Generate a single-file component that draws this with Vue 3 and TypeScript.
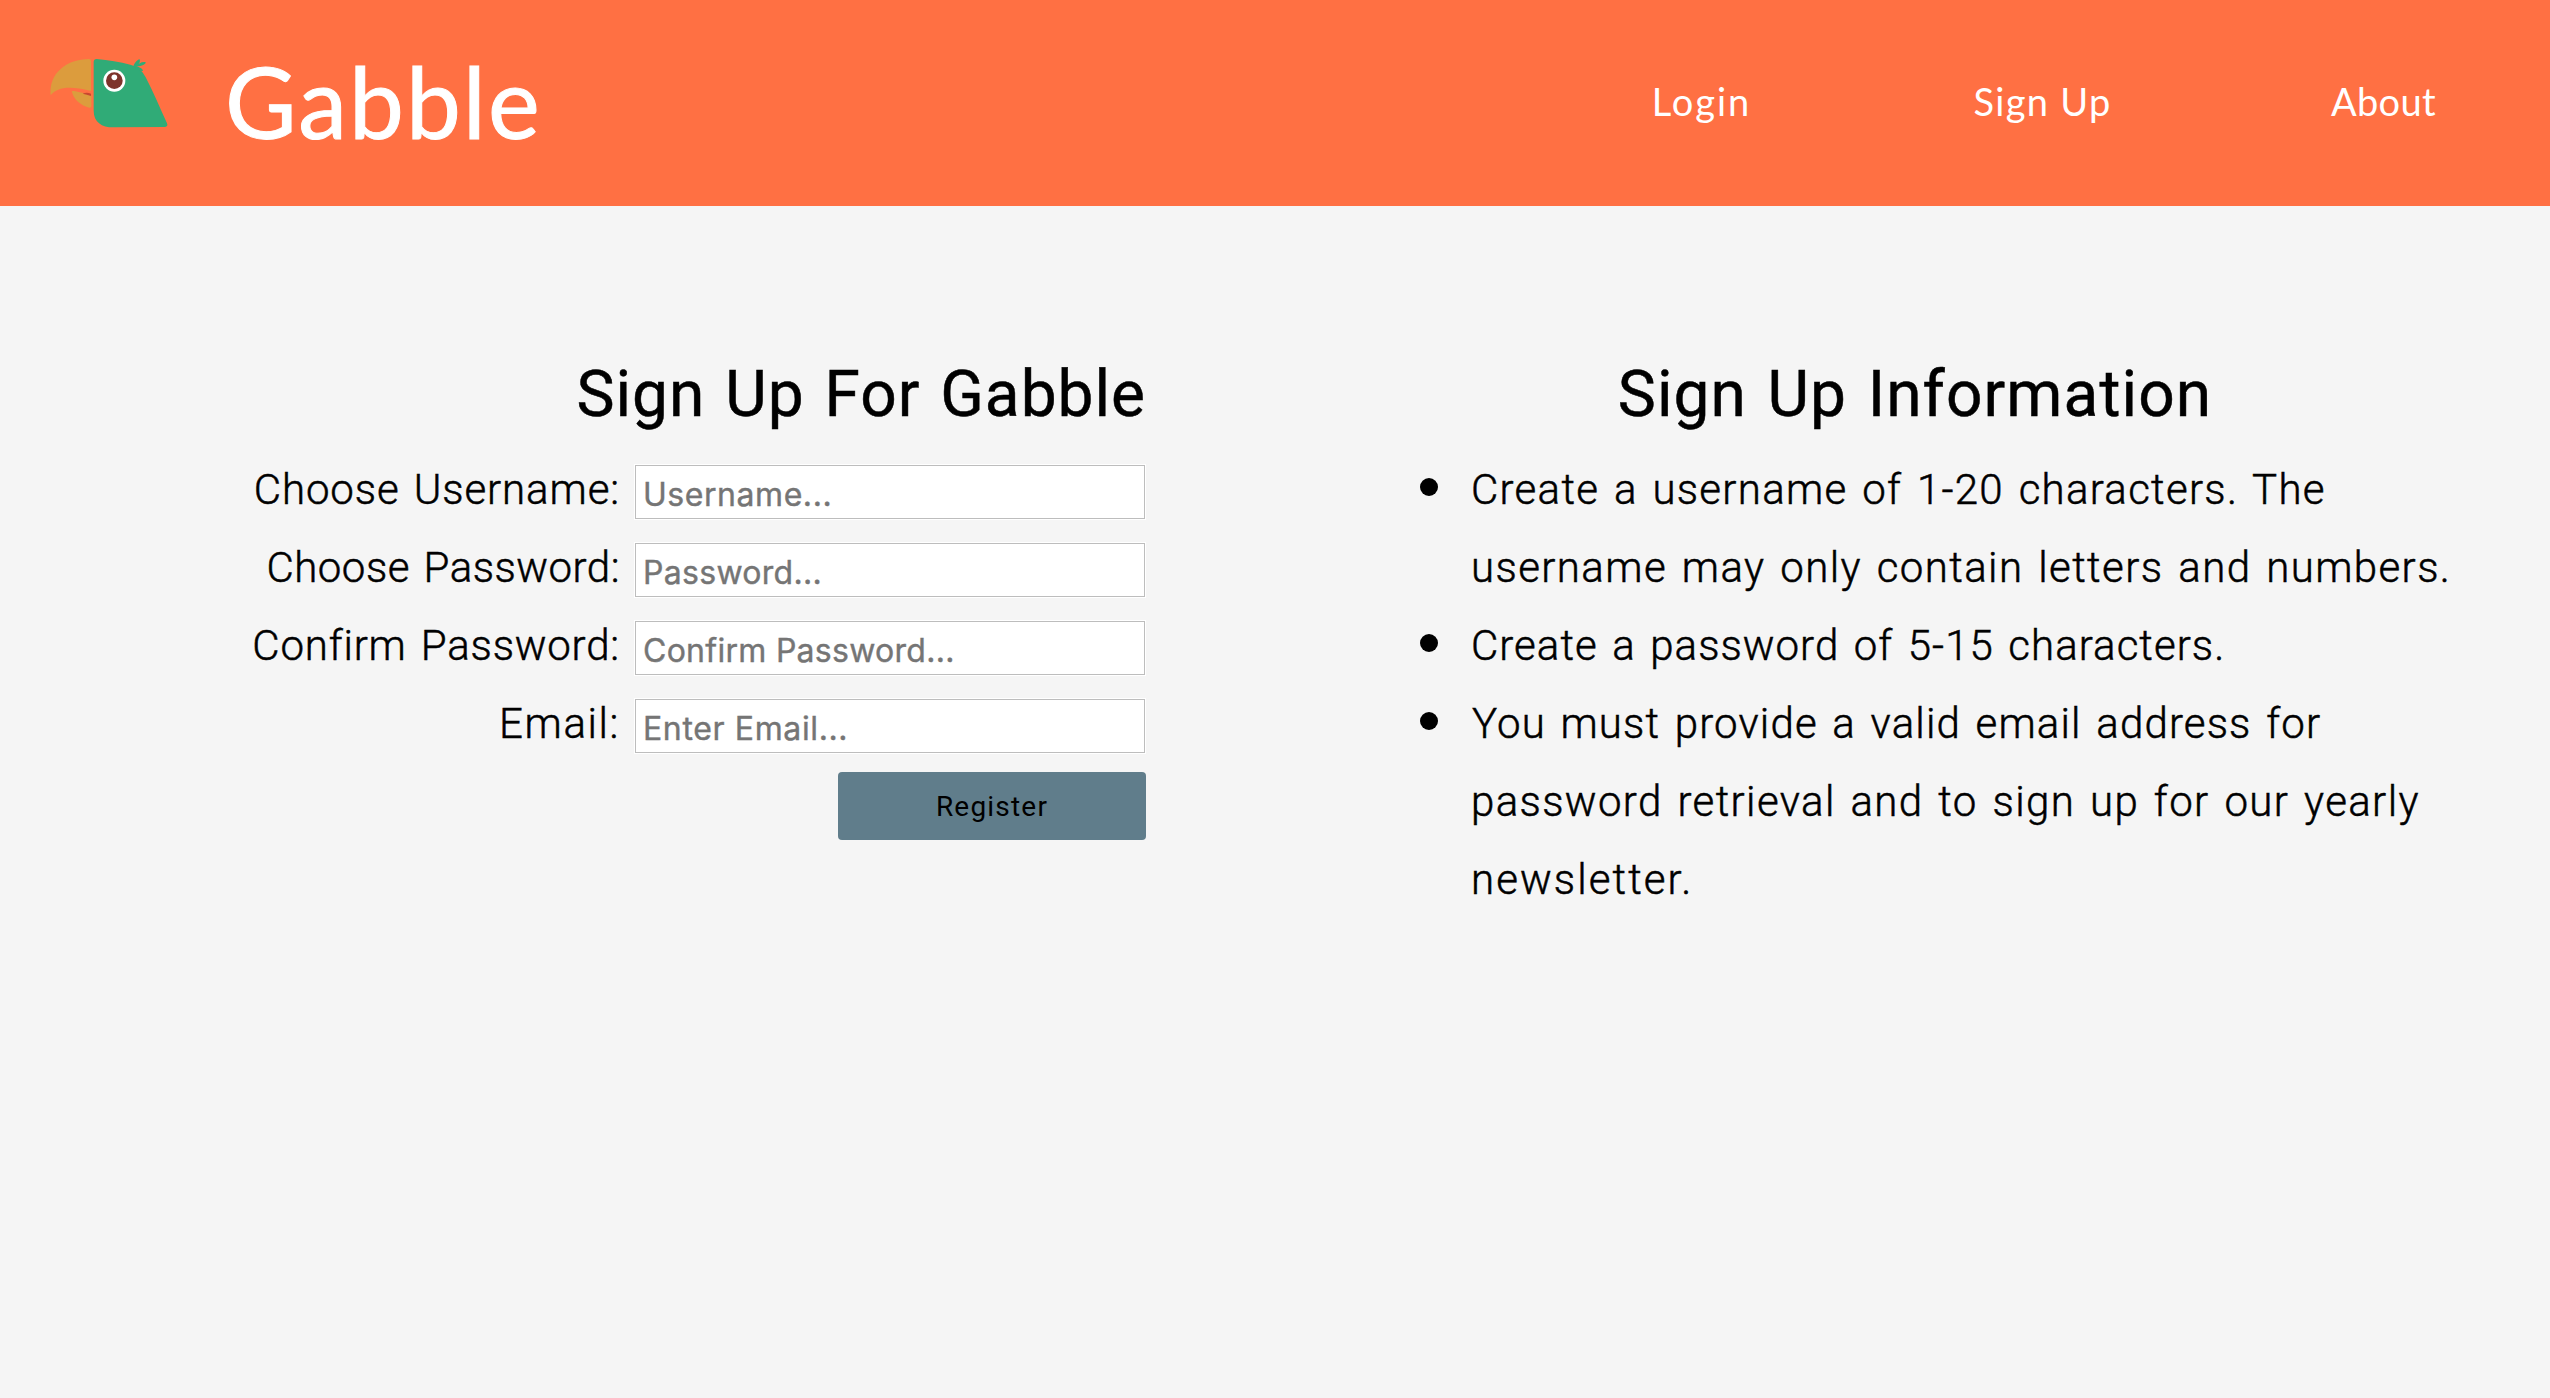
<script setup lang="ts">
interface Tracked {
  text: string
  tracking: number
}

interface Field {
  label: Tracked
  placeholder: Tracked
  type: string
}

interface Line extends Tracked {
  indent: number
}

const links: Tracked[] = [
  { text: 'Login', tracking: 2 },
  { text: 'Sign Up', tracking: 1.3 },
  { text: 'About', tracking: 0.3 },
]

const fields: Field[] = [
  { label: { text: 'Choose Username:', tracking: 0.9 }, placeholder: { text: 'Username...', tracking: 0.55 }, type: 'text' },
  { label: { text: 'Choose Password:', tracking: 0.5 }, placeholder: { text: 'Password...', tracking: 0.3 }, type: 'password' },
  { label: { text: 'Confirm Password:', tracking: 0.82 }, placeholder: { text: 'Confirm Password...', tracking: 0.28 }, type: 'password' },
  { label: { text: 'Email:', tracking: 1.6 }, placeholder: { text: 'Enter Email...', tracking: 0.63 }, type: 'email' },
]

const rules: Line[][] = [
  [
    { text: 'Create a username of 1-20 characters. The', tracking: 1.28, indent: 1 },
    { text: 'username may only contain letters and numbers.', tracking: 1.4, indent: 1 },
  ],
  [{ text: 'Create a password of 5-15 characters.', tracking: 1.04, indent: 1 }],
  [
    { text: 'You must provide a valid email address for', tracking: 1.15, indent: 2 },
    { text: 'password retrieval and to sign up for our yearly', tracking: 1.37, indent: 1 },
    { text: 'newsletter.', tracking: 2.1, indent: 1 },
  ],
]

const spacing = (t: Tracked) => ({ letterSpacing: `${t.tracking}px` })
</script>

<template>
  <div class="page">
    <header class="bar">
      <svg class="parrot" viewBox="0 0 480 300" aria-hidden="true">
        <path d="M183 63 Q183 57 177 57 C112 57 56 98 62 166 C82 142 116 136 183 153 Z" fill="#dc9c3d" />
        <path d="M126 157 C124 152 130 153 136 154 L184 164 L184 199 Q184 204 178 203 C153 197 132 180 126 157 Z" fill="#dc9c3d" />
        <path d="M158 161 Q170 155 183 161 L183 168 Q170 164 158 161 Z" fill="#c8472f" />
        <path d="M191 66 Q191 57 200 57 C235 60 270 66 301 74 C326 81 336 91 347 112 C370 156 390 204 411 250 Q415 260 405 261 L250 262 C215 262 191 246 191 212 Z" fill="#30ab77" />
        <path d="M310 80 C313 70 320 60 329 58 C332 64 328 73 319 79 C326 70 337 64 347 67 C348 73 336 78 319 80 C328 80 338 85 339 92 C332 95 325 88 316 84 Z" fill="#30ab77" />
        <circle cx="253" cy="122" r="33" fill="#fff" />
        <circle cx="253" cy="122" r="25" fill="#7d332b" />
        <circle cx="253" cy="112" r="8.5" fill="#fff" />
      </svg>
      <h1 class="brand">Gabble</h1>
      <nav class="nav">
        <a v-for="link in links" :key="link.text" class="link" :style="spacing(link)">{{ link.text }}</a>
      </nav>
    </header>

    <main class="content">
      <form class="signup" @submit.prevent>
        <h2 class="title">Sign Up For Gabble</h2>
        <div v-for="field in fields" :key="field.label.text" class="row">
          <label class="label" :style="spacing(field.label)">{{ field.label.text }}</label>
          <input class="input" :type="field.type" :placeholder="field.placeholder.text" :style="spacing(field.placeholder)" />
        </div>
        <button class="register" type="submit">Register</button>
      </form>

      <section class="info">
        <h2 class="title info-title">Sign Up Information</h2>
        <ul class="rules">
          <li v-for="(rule, i) in rules" :key="i" class="rule">
            <div>
              <div v-for="line in rule" :key="line.text" class="line" :style="{ ...spacing(line), textIndent: `${line.indent}px` }">{{ line.text }}</div>
            </div>
          </li>
        </ul>
      </section>
    </main>
  </div>
</template>

<style>
body {
  background: #f5f5f5;
}
</style>

<style scoped>
.page {
  min-height: 1398px;
  overflow: hidden;
  background: #f5f5f5;
  color: #000;
  font-family: Roboto, sans-serif;
}

.bar {
  box-sizing: border-box;
  display: flex;
  align-items: center;
  height: 206px;
  padding: 0 0 4px 30px;
  background: #ff7043;
  color: #fff;
  font-family: Lato, sans-serif;
}

.parrot {
  flex: none;
  width: 160px;
  height: 100px;
  margin-bottom: 22px;
}

.brand {
  flex: none;
  width: 1306px;
  margin: 0 0 0 35px;
  font-size: 98px;
  font-weight: 400;
  line-height: 118px;
  letter-spacing: 2px;
  -webkit-text-stroke: 1px #fff;
}

.nav {
  display: grid;
  grid-template-columns: 341px 341px 341px;
}

.link {
  font-size: 38px;
  line-height: 46px;
  text-align: center;
}

.content {
  display: flex;
  padding-top: 150px;
}

.signup {
  display: flex;
  flex-direction: column;
  align-items: flex-end;
  width: 1146px;
}

.title {
  margin: 0 0 17px;
  font-size: 64px;
  font-weight: 400;
  line-height: 78px;
  letter-spacing: 1px;
  word-spacing: 3px;
  white-space: nowrap;
  -webkit-text-stroke: 0.5px #000;
}

.info-title {
  letter-spacing: 1.1px;
  word-spacing: 3.5px;
  text-align: center;
}

.row {
  display: flex;
  align-items: center;
  height: 78px;
  padding-right: 1px;
}

.label {
  margin-right: 15px;
  font-size: 42px;
  font-weight: 300;
  line-height: 78px;
  word-spacing: 3px;
  white-space: nowrap;
  -webkit-text-stroke: 0.5px #000;
}

.input {
  box-sizing: border-box;
  width: 510px;
  height: 54px;
  margin-top: 4px;
  padding: 4px 7px 0;
  border: 1px solid #bdbdbd;
  border-radius: 0;
  outline: none;
  background: #fff;
  box-shadow: 0 0 0 1px #fff;
  font-family: Inter, sans-serif;
  font-size: 32px;
}

.input::placeholder {
  color: #757575;
  -webkit-text-stroke: 0.4px #757575;
}

.register {
  width: 308px;
  height: 68px;
  margin-top: 9px;
  padding: 0;
  border: 0;
  border-radius: 4px;
  background: #607d8b;
  color: #000;
  font-family: Roboto, sans-serif;
  font-size: 28px;
  letter-spacing: 1.2px;
}

.info {
  width: 1030px;
  margin-left: 254px;
}

.rules {
  margin: 0;
  padding: 0 0 0 20px;
  list-style: none;
}

.rule {
  display: flex;
}

.rule::before {
  content: '';
  flex: none;
  width: 18px;
  height: 18px;
  margin: 27px 32px 0 0;
  border-radius: 50%;
  background: #000;
}

.line {
  font-size: 42px;
  font-weight: 300;
  line-height: 78px;
  word-spacing: 3.2px;
  white-space: nowrap;
  -webkit-text-stroke: 0.5px #000;
}
</style>
